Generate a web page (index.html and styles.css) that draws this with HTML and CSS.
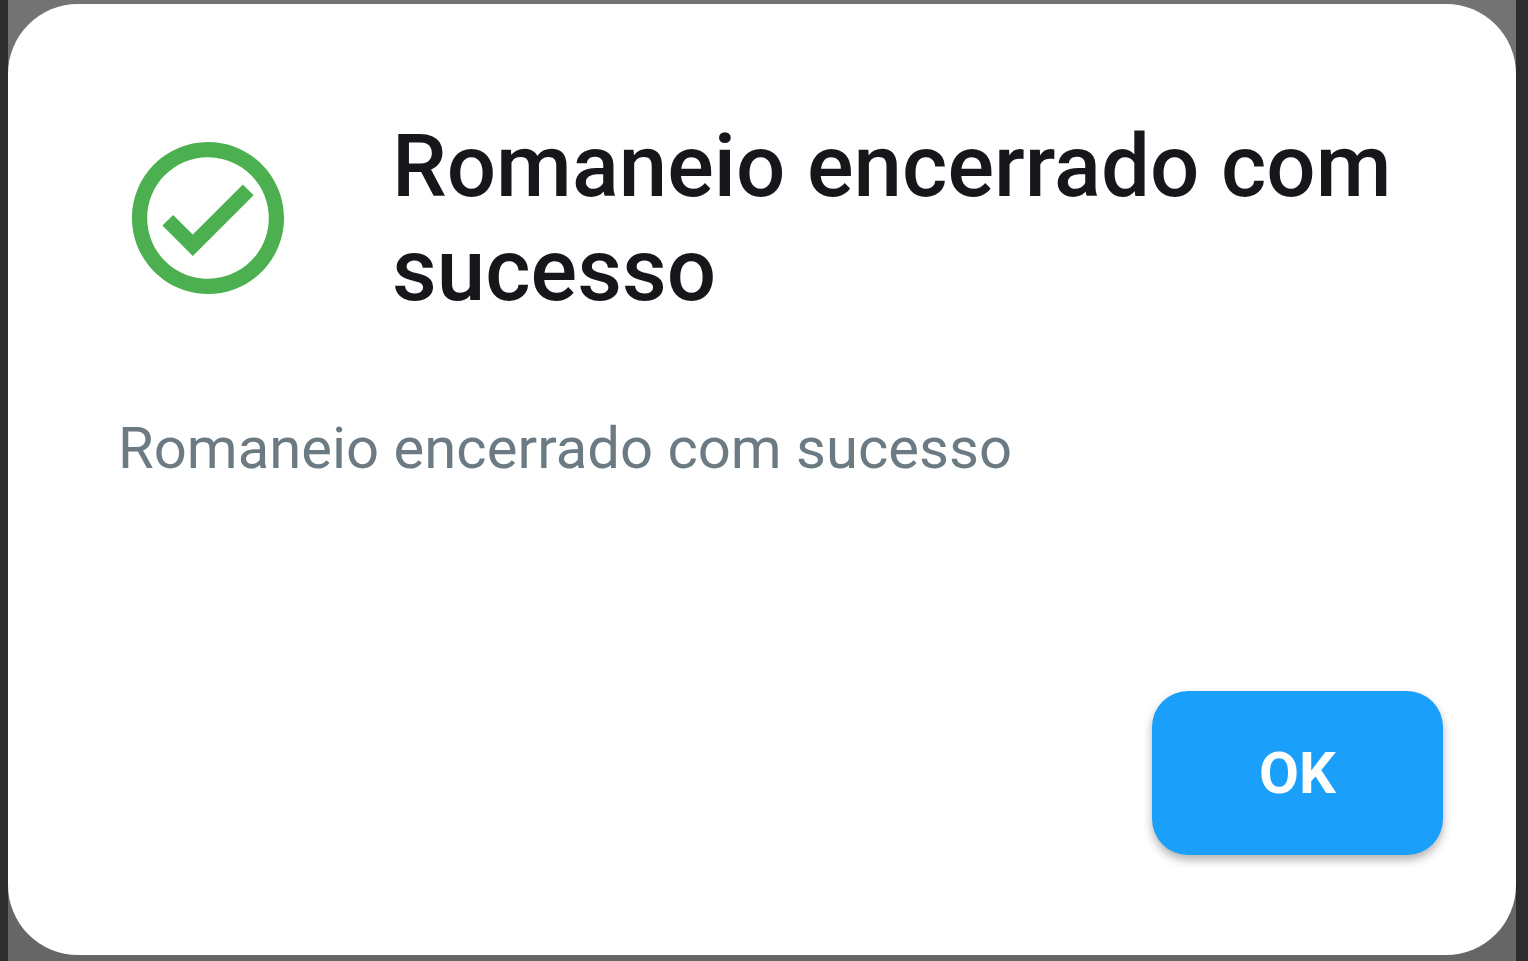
FILE: index.html
```
<!DOCTYPE html>
<html lang="pt-BR">
	<head>
		<meta charset="UTF-8" />
		<meta name="viewport" content="width=device-width, initial-scale=1.0" />
		<link rel="stylesheet" href="styles.css">
		<title>Romaneio</title>
	</head>
	<body>
		<div class="backdrop">
			<div class="dialog" role="alertdialog" aria-labelledby="title" aria-describedby="message">
				<div class="header">
					<svg class="icon" viewBox="2 2 20 20" aria-hidden="true">
						<path d="M16.59 7.58L10 14.17l-2.59-2.58L6 13l4 4 8-8zM12 2C6.48 2 2 6.48 2 12s4.48 10 10 10 10-4.48 10-10S17.52 2 12 2zm0 18c-4.42 0-8-3.58-8-8s3.58-8 8-8 8 3.58 8 8-3.58 8-8 8z" />
					</svg>
					<h1 class="title" id="title">Romaneio encerrado com sucesso</h1>
				</div>
				<p class="message" id="message">Romaneio encerrado com sucesso</p>
				<div class="actions">
					<button class="btn" type="button">OK</button>
				</div>
			</div>
		</div>
	</body>
</html>
```
FILE: styles.css
```
* {
	margin: 0;
	padding: 0;
	box-sizing: border-box;
}
body {
	min-height: 100vh;
	display: flex;
	padding: 0 12px 0 8px;
	background-color: #2d2d2d;
	font-family: Roboto, sans-serif;
}
.backdrop {
	flex: 1;
	display: flex;
	padding: 4px 0 6px;
	background: linear-gradient(#737373, #666);
}
.dialog {
	flex: 1;
	display: flex;
	flex-direction: column;
	padding: 110px 73px 100px 110px;
	border-radius: 70px;
	background-color: #fff;
}
.header {
	display: flex;
	align-items: center;
	gap: 108px;
	padding-left: 14px;
}
.icon {
	flex: none;
	width: 152px;
	height: 152px;
	fill: #4caf50;
}
.title {
	color: #17171b;
	font-size: 87px;
	font-weight: 500;
	line-height: 104px;
}
.message {
	margin-top: 90px;
	color: #6c7a83;
	font-size: 58px;
	line-height: 72px;
}
.actions {
	display: flex;
	justify-content: flex-end;
	margin-top: auto;
}
.btn {
	width: 291px;
	height: 164px;
	border: none;
	border-radius: 36px;
	background-color: #1a9ffa;
	box-shadow: 0 5px 10px rgba(0, 0, 0, 0.3);
	color: #fff;
	font-family: inherit;
	font-size: 58px;
	font-weight: 700;
	cursor: pointer;
}
```
